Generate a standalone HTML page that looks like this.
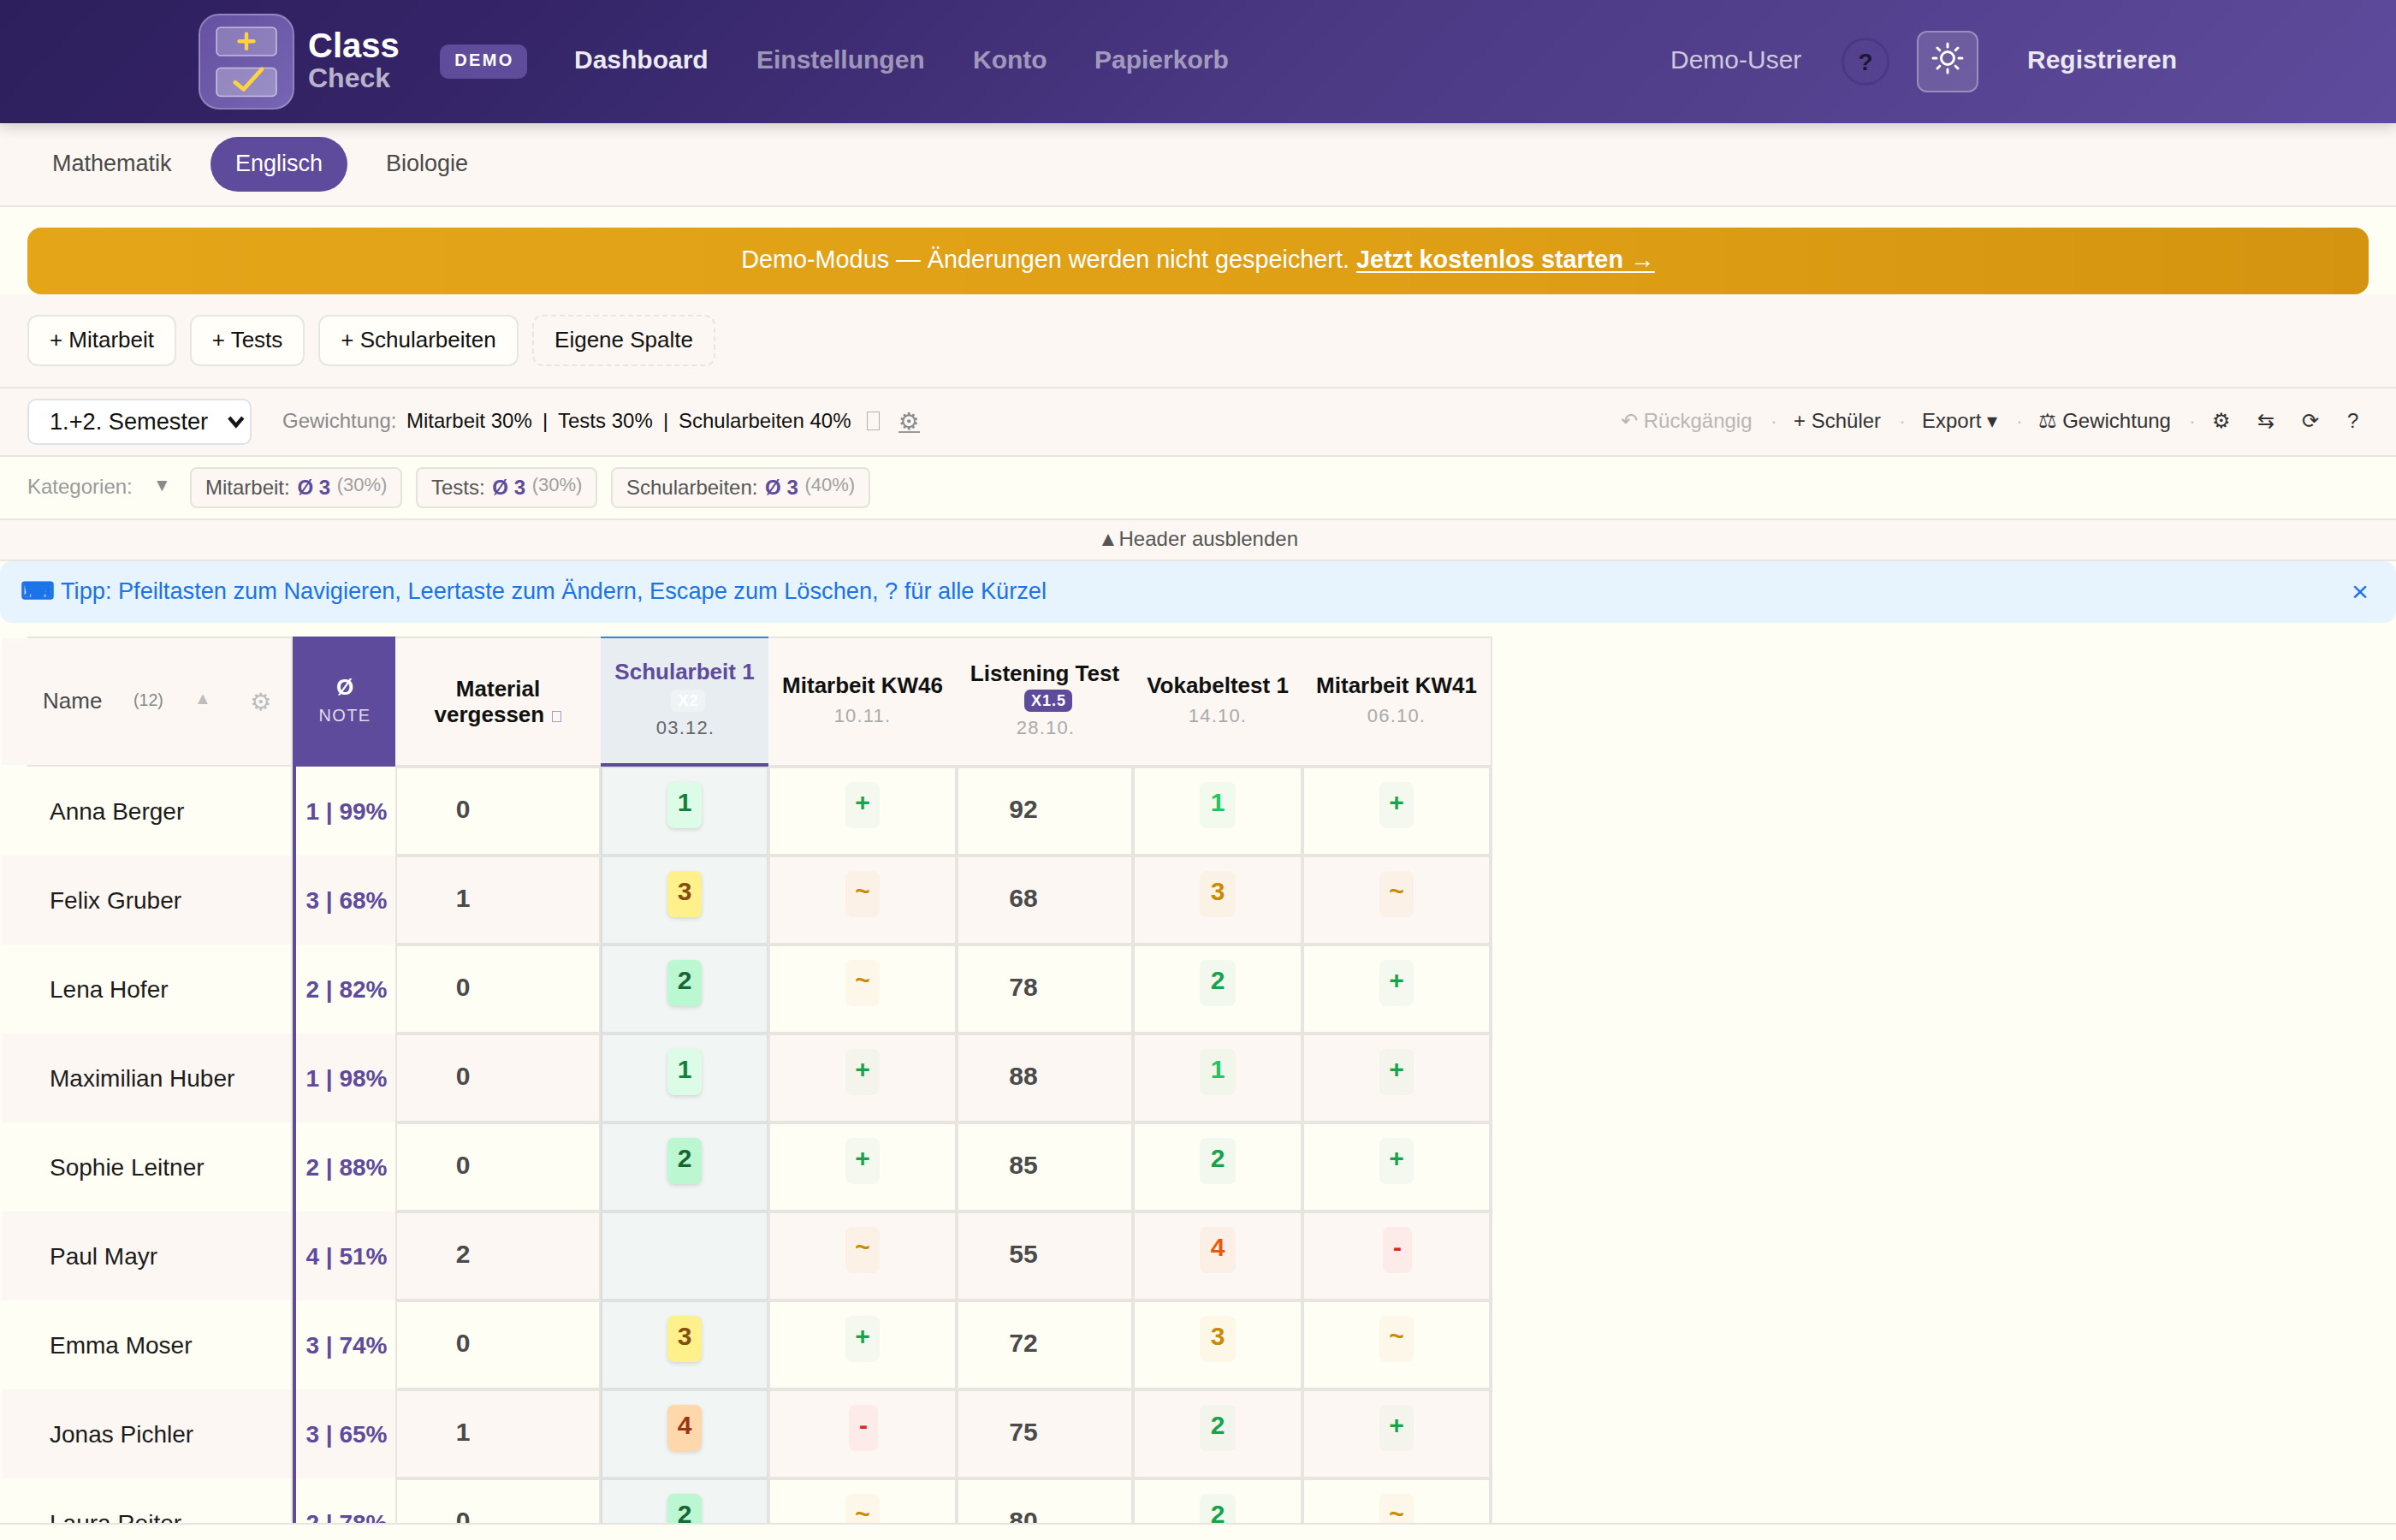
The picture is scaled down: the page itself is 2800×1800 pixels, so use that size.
<!DOCTYPE html>
<html lang="de">
<head>
<meta charset="utf-8">
<title>ClassCheck – Dashboard</title>
<style>
*{box-sizing:border-box;margin:0;padding:0}
html,body{width:2800px;height:1800px;overflow:hidden}
body{position:relative;background:#fefef5;font-family:"Liberation Sans","DejaVu Sans",sans-serif;color:#222;font-size:28px;line-height:1.2}
.abs{position:absolute;white-space:nowrap}
/* ---------- top header ---------- */
#hdr{position:absolute;left:0;top:0;width:2800px;height:144px;background:linear-gradient(135deg,#2d1e5d 0%,#36266a 25%,#4b3984 55%,#5e4b9b 100%);box-shadow:0 4px 16px rgba(30,20,10,.2);z-index:5}
#logo{position:absolute;left:232px;top:16px;width:112px;height:112px;border-radius:24px;background:linear-gradient(135deg,#6552a2,#7565b2);border:2px solid rgba(255,255,255,.25)}
#logo svg{position:absolute;left:-2px;top:-2px}
.brand1{left:360px;top:29px;font-size:40px;font-weight:700;color:#fff;line-height:48px}
.brand2{left:360px;top:72px;font-size:32px;font-weight:700;color:rgba(255,255,255,.68);line-height:38px}
#demo{left:514px;top:52px;width:102px;height:40px;border-radius:10px;background:#5f4d9c;color:#fff;font-size:20px;font-weight:700;letter-spacing:2.4px;text-align:center;line-height:36px;padding-left:2px}
.nav{top:51px;font-size:30px;font-weight:700;line-height:38px;color:rgba(255,255,255,.52)}
.nav.on{color:rgba(255,255,255,.92)}
#user{left:1952px;top:51px;font-size:30px;line-height:38px;color:rgba(255,255,255,.72)}
#help{left:2152px;top:44px;width:56px;height:56px;border-radius:50%;border:3px solid rgba(30,15,70,.17);color:#1b1530;font-size:28px;font-weight:700;text-align:center;line-height:52px}
#sun{left:2240px;top:36px;width:72px;height:72px;border-radius:12px;background:rgba(255,255,255,.14);border:2px solid rgba(255,255,255,.3)}
#reg{left:2369px;top:51px;font-size:30px;font-weight:700;line-height:38px;color:rgba(255,255,255,.88)}
/* ---------- tabs ---------- */
#tabs{position:absolute;left:0;top:144px;width:2800px;height:98px;background:#fcf7f3;border-bottom:2px solid #e9e5e1}
.tab{top:16px;height:64px;line-height:62px;font-size:27px;color:#4a4a4a;padding:0 29px;border-radius:32px}
.tab.on{background:#5e4b9b;color:#fff}
/* ---------- banner ---------- */
#banner{position:absolute;left:32px;top:266px;width:2736px;height:78px;border-radius:16px;background:linear-gradient(90deg,#e5a519 0%,#e0a016 55%,#d4940f 100%);color:#fff;font-size:28.8px;line-height:74px;text-align:center;white-space:nowrap}
#banner b{font-weight:700;text-decoration:underline;text-decoration-thickness:2px;text-underline-offset:4px}
/* ---------- toolbars ---------- */
.band{position:absolute;left:0;width:2800px;background:#fcf7f3;border-bottom:2px solid #e9e5e1}
.btn{top:368px;height:60px;border:2px solid #e7e6df;border-radius:12px;background:#fffef9;font-size:26px;line-height:54px;color:#111;text-align:center}
.btn.dash{border-style:dashed;background:transparent}
#sel{left:32px;top:466px;width:262px;height:54px;border:2px solid #dde3ea;border-radius:10px;background:#fff;font-size:27.2px;line-height:49px;color:#111;padding-left:24px}
.t2{top:476px;font-size:24px;line-height:32px;color:#111}
.t2.g{color:#8a8a8a}
.act{top:475px;font-size:24px;line-height:34px;color:#333}
.act.dis{color:#b9b6b3}
.act.dot{color:#c8c5c2}
.sym{font-family:"DejaVu Sans",sans-serif}
.chip{top:546px;height:48px;border:2px solid #e6e3dd;border-radius:8px;background:#fcf7f3;font-size:24px;line-height:44px;color:#555;padding:0 16px}
.chip b{color:#5e4b9b;margin-left:2px}
.chip small{font-size:22px;color:#a0a0a0;position:relative;top:-4px;margin-left:1px}
#tip{position:absolute;left:0;top:656px;width:2800px;height:72px;border-radius:14px;background:#e7f3fd;color:#1a73e8;font-size:27.2px;line-height:70px;white-space:nowrap}

/* ---------- table ---------- */
#tbl{position:absolute;left:0;top:744px;width:2800px;height:1036px;overflow:hidden}
.hbg{background:#fcf7f3}
.pk{background:#fcf7f3}
.ht{text-align:center;font-size:26px;font-weight:700;line-height:30px;color:#111}
.hb{text-align:center;height:26px;line-height:26px;font-size:0}
.hb span{display:inline-block;height:26px;line-height:26px;padding:0 7px 0 8px;border-radius:7px;color:#fff;font-size:18px;font-weight:700;letter-spacing:1px;vertical-align:top}
.hd{text-align:center;font-size:22px;line-height:28px;letter-spacing:1.2px;color:#aaa}
.nm{font-size:28px;line-height:34px;color:#1c1c1c}
.nt{width:116px;text-align:center;font-size:28px;font-weight:700;line-height:34px;color:#5e4b9b}
.c{height:104px;border:2px solid #e8e5e0}
.c.re{background:#fefef5}
.c.ro{background:#fcf7f3}
.c.sa{background:#f1f5f4;border-color:#dfe2e1;border-left-color:#d9dcdb}
.num{width:80px;text-align:center;font-size:30px;font-weight:700;line-height:36px;color:#4a4a4a}
.chp{top:16px;height:54px;border-radius:8px;text-align:center;font-size:30px;font-weight:700;line-height:48px}
</style>
</head>
<body>

<!-- ================= HEADER ================= -->
<div id="hdr">
  <div id="logo">
    <svg width="112" height="112" viewBox="0 0 112 112">
      <rect x="21" y="16" width="70" height="33" rx="5" fill="rgba(255,255,255,.22)" stroke="rgba(255,255,255,.55)" stroke-width="1.6"/>
      <rect x="21" y="63.5" width="70" height="33" rx="5" fill="rgba(255,255,255,.28)" stroke="rgba(255,255,255,.55)" stroke-width="1.6"/>
      <path d="M56 23.8v17M47.5 32.3h17" stroke="#ffd23f" stroke-width="4.4" stroke-linecap="round" fill="none"/>
      <path d="M42.7 80.2l10 8.3 21.3-23.7" stroke="#ffd23f" stroke-width="4.8" stroke-linecap="round" stroke-linejoin="round" fill="none"/>
    </svg>
  </div>
  <div class="abs brand1">Class</div>
  <div class="abs brand2">Check</div>
  <div class="abs" id="demo">DEMO</div>
  <div class="abs nav on" style="left:671px">Dashboard</div>
  <div class="abs nav" style="left:884px">Einstellungen</div>
  <div class="abs nav" style="left:1137px">Konto</div>
  <div class="abs nav" style="left:1279px">Papierkorb</div>
  <div class="abs" id="user">Demo-User</div>
  <div class="abs" id="help">?</div>
  <div class="abs" id="sun">
    <svg width="68" height="68" viewBox="0 0 68 68" style="position:absolute;left:0;top:0">
      <g stroke="#fff" stroke-width="3" stroke-linecap="round" fill="none">
        <circle cx="34" cy="30" r="7.5"/>
        <path d="M34 13v4M34 43v4M17 30h4M47 30h4M22 18l2.8 2.8M43.2 39.2L46 42M46 18l-2.8 2.8M24.8 39.2L22 42"/>
      </g>
    </svg>
  </div>
  <div class="abs" id="reg">Registrieren</div>
</div>

<!-- ================= TABS ================= -->
<div id="tabs">
  <div class="abs tab" style="left:32px">Mathematik</div>
  <div class="abs tab on" style="left:246px">Englisch</div>
  <div class="abs tab" style="left:422px">Biologie</div>
</div>

<!-- ================= BANNER ================= -->
<div id="banner">Demo-Modus — Änderungen werden nicht gespeichert. <b>Jetzt kostenlos starten →</b></div>

<!-- ================= TOOLBAR 1 ================= -->
<div class="band" style="top:344px;height:110px"></div>
<div class="abs btn" style="left:32px;width:174px">+ Mitarbeit</div>
<div class="abs btn" style="left:222px;width:134px">+ Tests</div>
<div class="abs btn" style="left:372px;width:234px">+ Schularbeiten</div>
<div class="abs btn dash" style="left:622px;width:214px">Eigene Spalte</div>

<!-- ================= TOOLBAR 2 ================= -->
<div class="band" style="top:454px;height:80px"></div>
<div class="abs" id="sel">1.+2. Semester
  <svg width="26" height="22" viewBox="0 0 26 22" style="position:absolute;left:229px;top:16px"><path d="M4.8 4L12.8 13.4L20.8 4" stroke="#151515" stroke-width="4.3" fill="none" stroke-linecap="butt" stroke-linejoin="miter"/></svg>
</div>
<div class="abs t2 g" style="left:330px">Gewichtung:</div>
<div class="abs t2" style="left:475px">Mitarbeit 30%</div>
<div class="abs t2" style="left:634px">|</div>
<div class="abs t2" style="left:652px">Tests 30%</div>
<div class="abs t2" style="left:775px">|</div>
<div class="abs t2" style="left:793px">Schularbeiten 40%</div>
<div class="abs" style="left:1013px;top:481px;width:15px;height:22px;border:1.5px solid #b5b2ae"></div>
<div class="abs sym" style="left:1050px;top:476px;font-size:27.5px;line-height:32px;color:#8a8a8a;border-bottom:2px solid #9a9a9a;height:30px">⚙</div>

<div class="abs act dis" style="left:1894px"><span class="sym">↶</span> Rückgängig</div>
<div class="abs act dot" style="left:2069px">·</div>
<div class="abs act" style="left:2096px">+ Schüler</div>
<div class="abs act dot" style="left:2219px">·</div>
<div class="abs act" style="left:2246px">Export <span class="sym">▾</span></div>
<div class="abs act dot" style="left:2356px">·</div>
<div class="abs act" style="left:2382px"><span class="sym">⚖</span> Gewichtung</div>
<div class="abs act dot" style="left:2558px">·</div>
<div class="abs act sym" style="left:2585px">⚙</div>
<div class="abs act sym" style="left:2638px">⇆</div>
<div class="abs act sym" style="left:2690px">⟳</div>
<div class="abs act" style="left:2743px">?</div>

<!-- ================= CATEGORIES ================= -->
<div class="abs" style="left:0;top:606px;width:2800px;height:2px;background:#e9e5e1"></div>
<div class="abs" style="left:32px;top:553px;font-size:24px;line-height:32px;color:#9a9a9a">Kategorien:</div>
<div class="abs" id="catv" style="left:179px;top:551px;font-size:20.8px;line-height:32px;color:#8a8a8a">▼</div>
<div class="abs chip" style="left:222px">Mitarbeit: <b>Ø 3</b> <small>(30%)</small></div>
<div class="abs chip" style="left:486px">Tests: <b>Ø 3</b> <small>(30%)</small></div>
<div class="abs chip" style="left:714px">Schularbeiten: <b>Ø 3</b> <small>(40%)</small></div>

<!-- ================= HIDE HEADER ================= -->
<div class="band" style="top:608px;height:48px"></div>
<div class="abs" id="hidetri" style="left:1283px;top:614px;font-size:24px;line-height:32px;color:#555">▲</div>
<div class="abs" id="hidetxt" style="left:1307.5px;top:614px;font-size:24px;line-height:32px;color:#555">Header ausblenden</div>

<!-- ================= TIP ================= -->
<div id="tip">
  <span class="abs sym" style="left:24px;top:0;font-size:27.2px;font-weight:700;-webkit-text-stroke:1.3px #1a73e8">⌨</span>
  <span class="abs" style="left:71px;top:0">Tipp: Pfeiltasten zum Navigieren, Leertaste zum Ändern, Escape zum Löschen, ? für alle Kürzel</span>
  <span class="abs" style="left:2748px;top:0;font-size:34px">×</span>
</div>

<!--TBL-START-->
<div id="tbl">
<div class="abs" style="left:32px;top:0;width:1712px;height:2px;background:#e7e4df"></div>
<div class="abs hbg" style="left:2px;top:2px;width:338px;height:148px"></div>
<div class="abs" style="left:32px;top:150px;width:308px;height:2px;background:#e7e4df"></div>
<div class="abs" style="left:340px;top:2px;width:2px;height:1040px;background:#ebe8e3"></div>
<div class="abs hbg" style="left:462px;top:2px;width:1282px;height:148px"></div>
<div class="abs" style="left:1742px;top:0;width:2px;height:1040px;background:#e7e4df"></div>
<div class="abs" style="left:462px;top:150px;width:1282px;height:2px;background:#e7e4df"></div>
<div class="abs" style="left:50px;top:59px;font-size:26px;line-height:32px;color:#4a4a4a">Name</div>
<div class="abs" style="left:156px;top:61px;font-size:19.6px;line-height:26px;color:#888">(12)</div>
<div class="abs" id="nametri" style="left:227px;top:59px;font-size:20px;line-height:26px;color:#bdbdbd">▲</div>
<div class="abs sym" style="left:292px;top:59px;font-size:28px;line-height:36px;color:#bdbdbd">⚙</div>
<div class="abs" style="left:342px;top:0;width:120px;height:152px;background:#5e4b9b"></div>
<div class="abs" style="left:343px;top:43px;width:120px;text-align:center;font-size:26px;font-weight:700;line-height:32px;color:#fff">Ø</div>
<div class="abs" style="left:342px;top:79px;width:120px;text-align:center;font-size:20px;line-height:26px;letter-spacing:1.4px;color:rgba(255,255,255,.82);padding-left:2px">NOTE</div>
<div class="abs" style="left:342px;top:152px;width:4px;height:900px;background:#5e4b9b"></div>
<div class="abs ht" style="left:462px;width:240px;top:46px">Material<br>vergessen <span style="display:inline-block;width:11px;height:13px;border:1.5px solid #a99ad2;margin-left:2px;position:relative;top:0px"></span></div>
<div class="abs" style="left:702px;top:0;width:196px;height:152px;background:#e8edf2;border-top:2px solid #3b82d8;border-bottom:4px solid #5e4b9b"></div>
<div class="abs ht" style="left:702px;width:196px;top:26px;color:#5e4b9b">Schularbeit 1</div>
<div class="abs hb" style="left:706px;width:196px;top:62px"><span style="background:rgba(255,255,255,.32)">X2</span></div>
<div class="abs hd" style="left:703px;width:196px;top:93px;color:#666">03.12.</div>
<div class="abs ht" style="left:898px;width:220px;top:42px">Mitarbeit KW46</div>
<div class="abs hd" style="left:898px;width:220px;top:79px">10.11.</div>
<div class="abs ht" style="left:1118px;width:206px;top:28px;color:#111">Listening Test</div>
<div class="abs hb" style="left:1122px;width:206px;top:62px"><span style="background:#5e4b9b">X1.5</span></div>
<div class="abs hd" style="left:1119px;width:206px;top:93px;color:#aaa">28.10.</div>
<div class="abs ht" style="left:1324px;width:198px;top:42px">Vokabeltest 1</div>
<div class="abs hd" style="left:1324px;width:198px;top:79px">14.10.</div>
<div class="abs ht" style="left:1522px;width:220px;top:42px">Mitarbeit KW41</div>
<div class="abs hd" style="left:1522px;width:220px;top:79px">06.10.</div>
<div class="abs nm" style="left:58px;top:188px">Anna Berger</div>
<div class="abs nt" style="left:347px;top:188px">1 | 99%</div>
<div class="abs c re" style="left:462px;top:152px;width:240px">
<span class="abs num" style="left:37px;top:30px">0</span>
</div>
<div class="abs c sa" style="left:702px;top:152px;width:196px">
<span class="abs chp" style="left:76px;width:40px;background:#dcfce7;color:#15803d;box-shadow:0 2px 5px rgba(0,0,0,.12);">1</span>
</div>
<div class="abs c re" style="left:898px;top:152px;width:220px">
<span class="abs chp" style="left:88px;width:40px;background:#f4f8ef;color:#16a34a;">+</span>
</div>
<div class="abs c re" style="left:1118px;top:152px;width:206px">
<span class="abs num" style="left:36px;top:30px">92</span>
</div>
<div class="abs c re" style="left:1324px;top:152px;width:198px">
<span class="abs chp" style="left:76px;width:42px;background:#f2faee;color:#22c55e;">1</span>
</div>
<div class="abs c re" style="left:1522px;top:152px;width:220px">
<span class="abs chp" style="left:88px;width:40px;background:#f4f8ef;color:#16a34a;">+</span>
</div>
<div class="abs pk" style="left:2px;top:256px;width:338px;height:104px"></div>
<div class="abs pk" style="left:346px;top:256px;width:116px;height:104px"></div>
<div class="abs nm" style="left:58px;top:292px">Felix Gruber</div>
<div class="abs nt" style="left:347px;top:292px">3 | 68%</div>
<div class="abs c ro" style="left:462px;top:256px;width:240px">
<span class="abs num" style="left:37px;top:30px">1</span>
</div>
<div class="abs c sa" style="left:702px;top:256px;width:196px">
<span class="abs chp" style="left:76px;width:40px;background:#fef08a;color:#854d0e;box-shadow:0 2px 5px rgba(0,0,0,.12);">3</span>
</div>
<div class="abs c ro" style="left:898px;top:256px;width:220px">
<span class="abs chp" style="left:88px;width:40px;background:#fbf1e7;color:#ca8a04;">~</span>
</div>
<div class="abs c ro" style="left:1118px;top:256px;width:206px">
<span class="abs num" style="left:36px;top:30px">68</span>
</div>
<div class="abs c ro" style="left:1324px;top:256px;width:198px">
<span class="abs chp" style="left:76px;width:42px;background:#fbf2e6;color:#ca8a04;">3</span>
</div>
<div class="abs c ro" style="left:1522px;top:256px;width:220px">
<span class="abs chp" style="left:88px;width:40px;background:#fbf1e7;color:#ca8a04;">~</span>
</div>
<div class="abs nm" style="left:58px;top:396px">Lena Hofer</div>
<div class="abs nt" style="left:347px;top:396px">2 | 82%</div>
<div class="abs c re" style="left:462px;top:360px;width:240px">
<span class="abs num" style="left:37px;top:30px">0</span>
</div>
<div class="abs c sa" style="left:702px;top:360px;width:196px">
<span class="abs chp" style="left:76px;width:40px;background:#bbf7d0;color:#166534;box-shadow:0 2px 5px rgba(0,0,0,.12);">2</span>
</div>
<div class="abs c re" style="left:898px;top:360px;width:220px">
<span class="abs chp" style="left:88px;width:40px;background:#fcf7e8;color:#ca8a04;">~</span>
</div>
<div class="abs c re" style="left:1118px;top:360px;width:206px">
<span class="abs num" style="left:36px;top:30px">78</span>
</div>
<div class="abs c re" style="left:1324px;top:360px;width:198px">
<span class="abs chp" style="left:76px;width:42px;background:#f3f8ee;color:#16a34a;">2</span>
</div>
<div class="abs c re" style="left:1522px;top:360px;width:220px">
<span class="abs chp" style="left:88px;width:40px;background:#f4f8ef;color:#16a34a;">+</span>
</div>
<div class="abs pk" style="left:2px;top:464px;width:338px;height:104px"></div>
<div class="abs pk" style="left:346px;top:464px;width:116px;height:104px"></div>
<div class="abs nm" style="left:58px;top:500px">Maximilian Huber</div>
<div class="abs nt" style="left:347px;top:500px">1 | 98%</div>
<div class="abs c ro" style="left:462px;top:464px;width:240px">
<span class="abs num" style="left:37px;top:30px">0</span>
</div>
<div class="abs c sa" style="left:702px;top:464px;width:196px">
<span class="abs chp" style="left:76px;width:40px;background:#dcfce7;color:#15803d;box-shadow:0 2px 5px rgba(0,0,0,.12);">1</span>
</div>
<div class="abs c ro" style="left:898px;top:464px;width:220px">
<span class="abs chp" style="left:88px;width:40px;background:#f4f4ec;color:#16a34a;">+</span>
</div>
<div class="abs c ro" style="left:1118px;top:464px;width:206px">
<span class="abs num" style="left:36px;top:30px">88</span>
</div>
<div class="abs c ro" style="left:1324px;top:464px;width:198px">
<span class="abs chp" style="left:76px;width:42px;background:#f1f5ea;color:#22c55e;">1</span>
</div>
<div class="abs c ro" style="left:1522px;top:464px;width:220px">
<span class="abs chp" style="left:88px;width:40px;background:#f4f4ec;color:#16a34a;">+</span>
</div>
<div class="abs nm" style="left:58px;top:604px">Sophie Leitner</div>
<div class="abs nt" style="left:347px;top:604px">2 | 88%</div>
<div class="abs c re" style="left:462px;top:568px;width:240px">
<span class="abs num" style="left:37px;top:30px">0</span>
</div>
<div class="abs c sa" style="left:702px;top:568px;width:196px">
<span class="abs chp" style="left:76px;width:40px;background:#bbf7d0;color:#166534;box-shadow:0 2px 5px rgba(0,0,0,.12);">2</span>
</div>
<div class="abs c re" style="left:898px;top:568px;width:220px">
<span class="abs chp" style="left:88px;width:40px;background:#f4f8ef;color:#16a34a;">+</span>
</div>
<div class="abs c re" style="left:1118px;top:568px;width:206px">
<span class="abs num" style="left:36px;top:30px">85</span>
</div>
<div class="abs c re" style="left:1324px;top:568px;width:198px">
<span class="abs chp" style="left:76px;width:42px;background:#f3f8ee;color:#16a34a;">2</span>
</div>
<div class="abs c re" style="left:1522px;top:568px;width:220px">
<span class="abs chp" style="left:88px;width:40px;background:#f4f8ef;color:#16a34a;">+</span>
</div>
<div class="abs pk" style="left:2px;top:672px;width:338px;height:104px"></div>
<div class="abs pk" style="left:346px;top:672px;width:116px;height:104px"></div>
<div class="abs nm" style="left:58px;top:708px">Paul Mayr</div>
<div class="abs nt" style="left:347px;top:708px">4 | 51%</div>
<div class="abs c ro" style="left:462px;top:672px;width:240px">
<span class="abs num" style="left:37px;top:30px">2</span>
</div>
<div class="abs c sa" style="left:702px;top:672px;width:196px">
</div>
<div class="abs c ro" style="left:898px;top:672px;width:220px">
<span class="abs chp" style="left:88px;width:40px;background:#fbf1e7;color:#ca8a04;">~</span>
</div>
<div class="abs c ro" style="left:1118px;top:672px;width:206px">
<span class="abs num" style="left:36px;top:30px">55</span>
</div>
<div class="abs c ro" style="left:1324px;top:672px;width:198px">
<span class="abs chp" style="left:76px;width:42px;background:#fbefe6;color:#ea580c;">4</span>
</div>
<div class="abs c ro" style="left:1522px;top:672px;width:220px">
<span class="abs chp" style="left:92px;width:34px;background:#fcebe9;color:#dc2626;">-</span>
</div>
<div class="abs nm" style="left:58px;top:812px">Emma Moser</div>
<div class="abs nt" style="left:347px;top:812px">3 | 74%</div>
<div class="abs c re" style="left:462px;top:776px;width:240px">
<span class="abs num" style="left:37px;top:30px">0</span>
</div>
<div class="abs c sa" style="left:702px;top:776px;width:196px">
<span class="abs chp" style="left:76px;width:40px;background:#fef08a;color:#854d0e;box-shadow:0 2px 5px rgba(0,0,0,.12);">3</span>
</div>
<div class="abs c re" style="left:898px;top:776px;width:220px">
<span class="abs chp" style="left:88px;width:40px;background:#f4f8ef;color:#16a34a;">+</span>
</div>
<div class="abs c re" style="left:1118px;top:776px;width:206px">
<span class="abs num" style="left:36px;top:30px">72</span>
</div>
<div class="abs c re" style="left:1324px;top:776px;width:198px">
<span class="abs chp" style="left:76px;width:42px;background:#fdf7e8;color:#ca8a04;">3</span>
</div>
<div class="abs c re" style="left:1522px;top:776px;width:220px">
<span class="abs chp" style="left:88px;width:40px;background:#fcf7e8;color:#ca8a04;">~</span>
</div>
<div class="abs pk" style="left:2px;top:880px;width:338px;height:104px"></div>
<div class="abs pk" style="left:346px;top:880px;width:116px;height:104px"></div>
<div class="abs nm" style="left:58px;top:916px">Jonas Pichler</div>
<div class="abs nt" style="left:347px;top:916px">3 | 65%</div>
<div class="abs c ro" style="left:462px;top:880px;width:240px">
<span class="abs num" style="left:37px;top:30px">1</span>
</div>
<div class="abs c sa" style="left:702px;top:880px;width:196px">
<span class="abs chp" style="left:76px;width:40px;background:#fed7aa;color:#9a3412;box-shadow:0 2px 5px rgba(0,0,0,.12);">4</span>
</div>
<div class="abs c ro" style="left:898px;top:880px;width:220px">
<span class="abs chp" style="left:92px;width:34px;background:#fcebe9;color:#dc2626;">-</span>
</div>
<div class="abs c ro" style="left:1118px;top:880px;width:206px">
<span class="abs num" style="left:36px;top:30px">75</span>
</div>
<div class="abs c ro" style="left:1324px;top:880px;width:198px">
<span class="abs chp" style="left:76px;width:42px;background:#f3f4ec;color:#16a34a;">2</span>
</div>
<div class="abs c ro" style="left:1522px;top:880px;width:220px">
<span class="abs chp" style="left:88px;width:40px;background:#f4f4ec;color:#16a34a;">+</span>
</div>
<div class="abs nm" style="left:58px;top:1020px">Laura Reiter</div>
<div class="abs nt" style="left:347px;top:1020px">2 | 78%</div>
<div class="abs c re" style="left:462px;top:984px;width:240px">
<span class="abs num" style="left:37px;top:30px">0</span>
</div>
<div class="abs c sa" style="left:702px;top:984px;width:196px">
<span class="abs chp" style="left:76px;width:40px;background:#bbf7d0;color:#166534;box-shadow:0 2px 5px rgba(0,0,0,.12);">2</span>
</div>
<div class="abs c re" style="left:898px;top:984px;width:220px">
<span class="abs chp" style="left:88px;width:40px;background:#fcf7e8;color:#ca8a04;">~</span>
</div>
<div class="abs c re" style="left:1118px;top:984px;width:206px">
<span class="abs num" style="left:36px;top:30px">80</span>
</div>
<div class="abs c re" style="left:1324px;top:984px;width:198px">
<span class="abs chp" style="left:76px;width:42px;background:#f3f8ee;color:#16a34a;">2</span>
</div>
<div class="abs c re" style="left:1522px;top:984px;width:220px">
<span class="abs chp" style="left:88px;width:40px;background:#fcf7e8;color:#ca8a04;">~</span>
</div>
</div>
<div class="abs" style="left:0;top:1780px;width:2800px;height:20px;background:#fefef5;border-top:2px solid #e7e4df"></div>
<!--TBL-END-->

</body>
</html>
